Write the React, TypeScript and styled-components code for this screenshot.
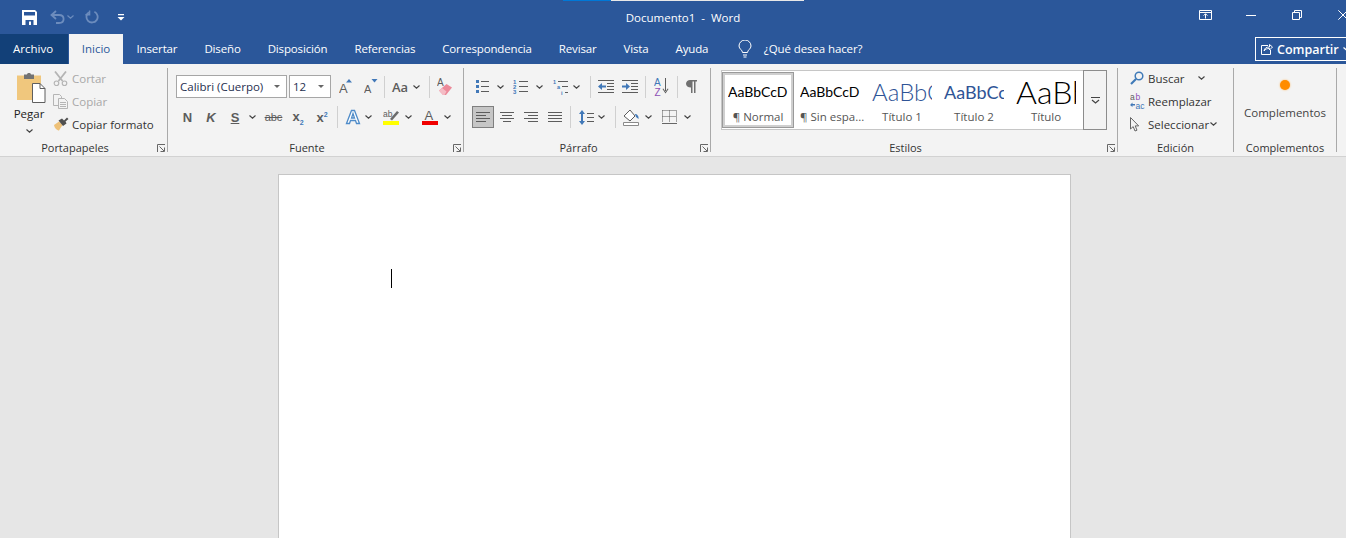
import React from 'react';
import styled, { createGlobalStyle } from 'styled-components';

const blue = '#2b579a';
const gray = '#5c5c5c';
const iconBlue = '#4178b8';
const uiFont = '"Open Sans", "Noto Sans", "Liberation Sans", sans-serif';

const GlobalStyle = createGlobalStyle`
  html, body {
    margin: 0;
    height: 100%;
    overflow: hidden;
    background: #e6e6e6;
  }
  body {
    font-family: ${uiFont};
    font-size: 11.5px;
    color: #444;
  }
`;

// ── small drawings ──

const Chev = ({ color = '#444' }: { color?: string }) => (
  <svg width="7" height="4" viewBox="0 0 7 4" fill="none">
    <path d="M.5.5l3 2.6 3-2.6" stroke={color} strokeWidth="1.2" />
  </svg>
);

const SaveIcon = () => (
  <svg width="15" height="15" viewBox="0 0 15 15">
    <path d="M0 0h13l2 2v13H0z" fill="#fff" />
    <path d="M2 2h11v3.500H2z" fill={blue} />
    <path d="M3.500 10h8v5h-8z" fill={blue} />
    <path d="M7 11.500h2V15H7z" fill="#fff" />
  </svg>
);

const UndoIcon = () => (
  <svg width="15" height="14" viewBox="0 0 15 14" fill="none" stroke="#6c8cbd" strokeWidth="1.8">
    <path d="M6 1L1.5 5 6 9" />
    <path d="M1.5 5H9c3 0 4.6 1.9 4.6 4s-1.6 4-4.6 4H6" />
  </svg>
);

const RedoIcon = () => (
  <svg width="14" height="14" viewBox="0 0 14 14" fill="none" stroke="#6c8cbd" strokeWidth="1.8">
    <path d="M4 2.200A5.600 5.600 0 1 0 9.400 1.800" />
    <path d="M4.600.4v4.400H.4" strokeWidth="1.4" />
  </svg>
);

const CustomizeIcon = () => (
  <svg width="8" height="7" viewBox="0 0 8 7" fill="#fff">
    <path d="M1 0h6v1.200H1zM.5 3h7L4 6.600z" />
  </svg>
);

const RibbonDisplayIcon = () => (
  <svg width="13" height="10" viewBox="0 0 13 10" fill="none" stroke="#fff">
    <path d="M.5.5h12v9H.5zM.5 2.500h12" />
    <path d="M6.500 8.500V4M4.600 5.600l1.900-1.900 1.900 1.900" />
  </svg>
);

const MinIcon = () => (
  <svg width="10" height="1" viewBox="0 0 10 1"><path d="M0 0h10v1H0z" fill="#fff" /></svg>
);

const RestoreIcon = () => (
  <svg width="10" height="10" viewBox="0 0 10 10" fill="none" stroke="#fff">
    <path d="M.5 2.500h7v7h-7zM2.500 2.500v-2h7v7h-2" />
  </svg>
);

const CloseIcon = () => (
  <svg width="10" height="10" viewBox="0 0 10 10" fill="none" stroke="#fff">
    <path d="M.3.3l9.400 9.400M9.700.3L.3 9.700" />
  </svg>
);

const BulbIcon = () => (
  <svg width="14" height="18" viewBox="0 0 14 18" fill="none" stroke="#fff">
    <path d="M4.500 12.500C4.500 10 1 9 1 6a6 6 0 0 1 12 0c0 3-3.500 4-3.500 6.500z" />
    <path d="M5 15h4M5.500 17h3" />
  </svg>
);

const ShareIcon = () => (
  <svg width="12" height="12" viewBox="0 0 12 12" fill="none" stroke="#fff">
    <path d="M7 2.500H.5v9h9V7" />
    <path d="M3 8c.4-3 2.500-4 5.500-4V1.500L11.500 4 8.500 7V5.500C6 5.500 4.500 6 3 8z" />
  </svg>
);

const PasteIcon = () => (
  <svg width="29" height="31" viewBox="0 0 29 31">
    <path d="M0 3.500h24V28H0z" fill="#f0c77d" />
    <path d="M7 2.500h3C10.400.600 13.600.600 14 2.500h3v4.500H7z" fill="#737373" />
    <path d="M15.500 11.500h7.500l5 5v14H15.500z" fill="#fff" stroke="#5f5f5f" />
    <path d="M23 11.500v5h5" fill="none" stroke="#5f5f5f" />
  </svg>
);

const CutIcon = () => (
  <svg width="15" height="15" viewBox="0 0 15 15" fill="none" stroke="#b5b5b5" strokeWidth="1.2">
    <path d="M2 .5l7.500 9.500M13 .5L5.500 10" strokeWidth="1.800" />
    <circle cx="3.500" cy="12.300" r="2.300" />
    <circle cx="11.500" cy="12.300" r="2.300" />
  </svg>
);

const CopyIcon = () => (
  <svg width="15" height="15" viewBox="0 0 15 15" fill="#f3f3f3" stroke="#b5b5b5">
    <path d="M.5.500h6l2 2v9h-8z" />
    <path d="M5.500 4.500h6l3 3v7h-9zM7 8.500h6M7 10.500h6M7 12.500h6" />
  </svg>
);

const BrushIcon = () => (
  <svg width="16" height="14" viewBox="0 0 16 14">
    <path d="M1 8l5-3.500L9.500 8 6 13.500C4 13.500 1.500 11 1 8z" fill="#eec178" />
    <path d="M5.500 3.500L9 1.500l2 2L14 .5l1.500 1.500-3 2.500 1 2-3.500 2.500z" fill="#505050" />
  </svg>
);

const GrowIcon = ({ up }: { up: boolean }) => (
  <svg width="14" height="15" viewBox="0 0 14 15">
    <text x="0" y="14" fontFamily='"Liberation Sans", sans-serif' fontSize={up ? 13 : 11} fill={gray}>A</text>
    <path d={up ? 'M7 3.500L10 0l3 3.500z' : 'M7.500 0h6l-3 3.500z'} fill={iconBlue} />
  </svg>
);

const EraserIcon = () => (
  <svg width="16" height="18" viewBox="0 0 16 18">
    <text x="0" y="8" fontFamily='"Liberation Sans", sans-serif' fontSize="10" fill={gray}>A</text>
    <path d="M2 12.500L9.500 6 15 9.500 9 17H6z" fill="#ec8a9a" />
    <path d="M2 12.500l3-2.500 4.500 3.500L7.500 17H6z" fill="#f4bcc5" />
  </svg>
);

const TextEffectIcon = () => (
  <svg width="16" height="16" viewBox="0 0 16 16" fill="#fff" stroke="#4f8cc9" strokeWidth="1.300">
    <path d="M1.500 14.500L6.500 1.500h3l5 13h-3l-1-3h-5l-1 3zM6.500 9h3L8 4.500z" />
  </svg>
);

const HighlightIcon = () => (
  <svg width="16" height="16" viewBox="0 0 16 16">
    <text x="0" y="8" fontFamily='"Liberation Sans", sans-serif' fontSize="8.500" fill={gray}>ab</text>
    <path d="M7 10l7-8 2 1.500-7 8z" fill="#6b6b6b" />
    <path d="M0 12h16v4H0z" fill="#ffff00" />
  </svg>
);

const FontColorIcon = () => (
  <svg width="16" height="16" viewBox="0 0 16 16">
    <text x="2.500" y="11" fontFamily='"Liberation Sans", sans-serif' fontSize="13" fill={gray}>A</text>
    <path d="M0 12h16v4H0z" fill="#f00000" />
  </svg>
);

const BulletsIcon = () => (
  <svg width="14" height="15" viewBox="0 0 14 15">
    <path d="M0 1h3v3H0zM0 6h3v3H0zM0 11h3v3H0z" fill={iconBlue} />
    <path d="M5 2h8v1H5zM5 7h8v1H5zM5 12h8v1H5z" fill={gray} />
  </svg>
);

const NumberingIcon = () => (
  <svg width="15" height="15" viewBox="0 0 15 15">
    <text y="5" fontFamily='"Liberation Sans", sans-serif' fontSize="6" fontWeight="700" fill={iconBlue}>1</text>
    <text y="10" fontFamily='"Liberation Sans", sans-serif' fontSize="6" fontWeight="700" fill={iconBlue}>2</text>
    <text y="15" fontFamily='"Liberation Sans", sans-serif' fontSize="6" fontWeight="700" fill={iconBlue}>3</text>
    <path d="M6 2h9v1H6zM6 7h9v1H6zM6 12h9v1H6z" fill={gray} />
  </svg>
);

const MultilevelIcon = () => (
  <svg width="15" height="16" viewBox="0 0 15 16">
    <text y="5" fontFamily='"Liberation Sans", sans-serif' fontSize="5.500" fontWeight="700" fill={iconBlue}>1</text>
    <text x="4" y="10" fontFamily='"Liberation Sans", sans-serif' fontSize="5.500" fontWeight="700" fill={iconBlue}>a</text>
    <text x="8" y="15.500" fontFamily='"Liberation Sans", sans-serif' fontSize="5.500" fontWeight="700" fill={iconBlue}>i</text>
    <path d="M5 2h10v1H5zM9 7h6v1H9zM12 13h3v1h-3z" fill={gray} />
  </svg>
);

const IndentIcon = ({ out }: { out: boolean }) => (
  <svg width="16" height="13" viewBox="0 0 16 13">
    <path d="M0 0h16v1H0zM9 3h7v1H9zM9 6h7v1H9zM9 9h7v1H9zM0 12h16v1H0z" fill={gray} />
    <path
      d={out ? 'M0 6.500L4 3v2.500h4v2H4V10z' : 'M8 6.500L4 3v2.500H0v2h4V10z'}
      fill={iconBlue}
    />
  </svg>
);

const SortIcon = () => (
  <svg width="15" height="19" viewBox="0 0 15 19">
    <text x="0" y="8.500" fontFamily='"Liberation Sans", sans-serif' fontSize="10" fill={iconBlue}>A</text>
    <text x="0.500" y="18.500" fontFamily='"Liberation Sans", sans-serif' fontSize="10" fill="#8d4fb5">Z</text>
    <path d="M11 1h1v14h-1zM8.500 12l3 4.500 3-4.500-.8-.4-2.200 3.200-2.200-3.200z" fill={gray} />
  </svg>
);

const PilcrowIcon = () => (
  <svg width="11" height="13" viewBox="0 0 11 13" fill="#707070">
    <path d="M4 0h7v1.500H9.500V13H8V1.500H6.500V13H5V7.500C2 7.500 0 6 0 3.800S2 0 4 0z" />
  </svg>
);

const AlignIcon = ({ d }: { d: string }) => (
  <svg width="14" height="10" viewBox="0 0 14 10">
    <path d={d} stroke={gray} fill="none" />
  </svg>
);

const LineSpacingIcon = () => (
  <svg width="15" height="15" viewBox="0 0 15 15">
    <path d="M3 0l3 4H4v7h2l-3 4-3-4h2V4H0z" fill={iconBlue} />
    <path d="M8 3h7v1H8zM8 7h7v1H8zM8 11h7v1H8z" fill={gray} />
  </svg>
);

const ShadingIcon = () => (
  <svg width="16" height="17" viewBox="0 0 16 17">
    <path d="M1 7l6-6 5 6-5 5z" fill="#fff" stroke={gray} />
    <path d="M12 5c2 0 4 2 3.500 5L13 8z" fill={iconBlue} />
    <path d="M.5 13.500h15v3H.5z" fill="#fff" stroke="#8a8a8a" />
  </svg>
);

const BordersIcon = () => (
  <svg width="15" height="14" viewBox="0 0 15 14" fill="none">
    <path d="M.5.500h14M.5.500v11M14.500.500v11M7.500.500v11M.5 6.500h14" stroke="#555" strokeDasharray="1 1" />
    <path d="M0 13h15v1H0z" fill="#666" />
  </svg>
);

const LauncherIcon = () => (
  <svg width="8" height="8" viewBox="0 0 8 8" fill="none" stroke="#666">
    <path d="M.5 8V.5H8" />
    <path d="M2.500 2.500L7 7M7.500 3.500v4h-4" />
  </svg>
);

const SearchIcon = () => (
  <svg width="14" height="14" viewBox="0 0 14 14" fill="none">
    <circle cx="9" cy="5" r="3.800" stroke="#3f7ab8" strokeWidth="1.500" />
    <path d="M6 8l-5 5" stroke="#3f7ab8" strokeWidth="2.200" />
  </svg>
);

const ReplaceIcon = () => (
  <svg width="16" height="16" viewBox="0 0 16 16">
    <text x="0" y="7" fontFamily='"Liberation Sans", sans-serif' fontSize="8.500" fill={gray}>a</text>
    <text x="5.500" y="7" fontFamily='"Liberation Sans", sans-serif' fontSize="8.500" fill="#8d4fb5">b</text>
    <text x="5.500" y="15.500" fontFamily='"Liberation Sans", sans-serif' fontSize="8.500" fill={iconBlue}>ac</text>
    <path d="M0 12l2.500-2.500v1.500H5v1.500H2.500V14z" fill={iconBlue} />
  </svg>
);

const CursorIcon = () => (
  <svg width="10" height="15" viewBox="0 0 10 15" fill="#f3f3f3" stroke="#666">
    <path d="M.5.500v11.500l2.700-2.400 1.800 4.400 2-.8-1.800-4.300h3.500z" />
  </svg>
);

const ScrollIcon = () => (
  <svg width="9" height="7" viewBox="0 0 9 7" fill="none" stroke="#444">
    <path d="M0 .5h9" />
    <path d="M1 3l3.500 3L8 3" strokeWidth="1.200" />
  </svg>
);

// ── page ──

const tabs = ['Insertar', 'Diseño', 'Disposición', 'Referencias', 'Correspondencia', 'Revisar', 'Vista', 'Ayuda'];

const styles = [
  { label: '¶ Normal', sample: 'AaBbCcD', kind: 'normal', selected: true },
  { label: '¶ Sin espa...', sample: 'AaBbCcD', kind: 'normal', selected: false },
  { label: 'Título 1', sample: 'AaBbCc', kind: 'h1', selected: false },
  { label: 'Título 2', sample: 'AaBbCcD', kind: 'h2', selected: false },
  { label: 'Título', sample: 'AaBbC', kind: 'title', selected: false },
];

const App = () => (
  <Window>
    <GlobalStyle />
    <TitleBar>
      <LoadingStrip>
        <LoadingPart $w={48} $color="#0078d7" />
        <LoadingPart $w={193} $color="#e8e8e8" />
      </LoadingStrip>
      <QuickAccess>
        <QuickSlot $w={15}><SaveIcon /></QuickSlot>
        <QuickSlot $w={15} $ml={13}><UndoIcon /></QuickSlot>
        <QuickSlot $w={7} $ml={2}><Chev color="#6c8cbd" /></QuickSlot>
        <QuickSlot $w={14} $ml={11}><RedoIcon /></QuickSlot>
        <QuickSlot $w={8} $ml={18}><CustomizeIcon /></QuickSlot>
      </QuickAccess>
      <DocTitle>Documento1&nbsp; - &nbsp;Word</DocTitle>
      <WindowButtons>
        <WindowButton><RibbonDisplayIcon /></WindowButton>
        <WindowButton><MinIcon /></WindowButton>
        <WindowButton><RestoreIcon /></WindowButton>
        <WindowButton><CloseIcon /></WindowButton>
      </WindowButtons>
    </TitleBar>

    <TabBar>
      <FileTab>Archivo</FileTab>
      <ActiveTab>Inicio</ActiveTab>
      {tabs.map((t) => (
        <Tab key={t}>{t}</Tab>
      ))}
      <TellMe>
        <BulbIcon />
        <span>¿Qué desea hacer?</span>
      </TellMe>
      <ShareButton>
        <ShareIcon />
        <span>Compartir</span>
        <Chev color="#fff" />
      </ShareButton>
    </TabBar>

    <Ribbon>
      <Group $w={168}>
        <ClipboardBody>
          <PasteButton>
            <PasteArt><PasteIcon /></PasteArt>
            <PasteLabel>Pegar</PasteLabel>
            <Chev />
          </PasteButton>
          <SmallColumn>
            <SmallRow $disabled><SmallIcon><CutIcon /></SmallIcon>Cortar</SmallRow>
            <SmallRow $disabled><SmallIcon><CopyIcon /></SmallIcon>Copiar</SmallRow>
            <SmallRow><SmallIcon><BrushIcon /></SmallIcon>Copiar formato</SmallRow>
          </SmallColumn>
        </ClipboardBody>
        <GroupLabel $launcher>Portapapeles</GroupLabel>
        <Launcher><LauncherIcon /></Launcher>
      </Group>

      <Group $w={296}>
        <ToolRows>
          <ToolRow $h={23}>
            <ComboBox $w={111}>
              <span>Calibri (Cuerpo)</span>
              <ComboArrow />
            </ComboBox>
            <ComboBox $w={42} $ml={2}>
              <span>12</span>
              <ComboArrow />
            </ComboBox>
            <Slot $w={24} $ml={3}><GrowIcon up /></Slot>
            <Slot $w={26}><GrowIcon up={false} /></Slot>
            <ToolSep />
            <Slot $w={22} $ml={4}><CaseText>Aa</CaseText></Slot>
            <Slot $w={10}><Chev /></Slot>
            <ToolSep $ml={8} />
            <Slot $w={30}><EraserIcon /></Slot>
          </ToolRow>
          <ToolRow>
            <Slot $w={23}><BoldGlyph>N</BoldGlyph></Slot>
            <Slot $w={24}><ItalicGlyph>K</ItalicGlyph></Slot>
            <Slot $w={24}><UnderGlyph>S</UnderGlyph></Slot>
            <Slot $w={11}><Chev /></Slot>
            <Slot $w={31}><StrikeGlyph>abc</StrikeGlyph></Slot>
            <Slot $w={18}><BoldGlyph>x<Sub>2</Sub></BoldGlyph></Slot>
            <Slot $w={30}><BoldGlyph>x<Sup>2</Sup></BoldGlyph></Slot>
            <ToolSep />
            <Slot $w={22} $ml={4}><TextEffectIcon /></Slot>
            <Slot $w={8}><Chev /></Slot>
            <Slot $w={18} $ml={10}><HighlightIcon /></Slot>
            <Slot $w={8} $ml={4}><Chev /></Slot>
            <Slot $w={18} $ml={9}><FontColorIcon /></Slot>
            <Slot $w={8} $ml={4}><Chev /></Slot>
          </ToolRow>
        </ToolRows>
        <GroupLabel $launcher>Fuente</GroupLabel>
        <Launcher><LauncherIcon /></Launcher>
      </Group>

      <Group $w={247}>
        <ToolRows>
          <ToolRow $h={23}>
            <Slot $w={21}><BulletsIcon /></Slot>
            <Slot $w={8} $ml={3}><Chev /></Slot>
            <Slot $w={21} $ml={6}><NumberingIcon /></Slot>
            <Slot $w={8} $ml={4}><Chev /></Slot>
            <Slot $w={22} $ml={6}><MultilevelIcon /></Slot>
            <Slot $w={8} $ml={1}><Chev /></Slot>
            <ToolSep $ml={10} />
            <Slot $w={30}><IndentIcon out /></Slot>
            <Slot $w={18}><IndentIcon out={false} /></Slot>
            <ToolSep $ml={6} />
            <Slot $w={31}><SortIcon /></Slot>
            <ToolSep />
            <Slot $w={27}><PilcrowIcon /></Slot>
          </ToolRow>
          <ToolRow>
            <AlignButton $active><AlignIcon d="M0 .5h14M0 3.500h10M0 6.500h14M0 9.500h10" /></AlignButton>
            <AlignButton $ml={2}><AlignIcon d="M0 .5h14M2 3.500h10M0 6.500h14M3 9.500h8" /></AlignButton>
            <AlignButton $ml={2}><AlignIcon d="M0 .5h14M4 3.500h10M0 6.500h14M4 9.500h10" /></AlignButton>
            <AlignButton $ml={2}><AlignIcon d="M0 .5h14M0 3.500h14M0 6.500h14M0 9.500h14" /></AlignButton>
            <ToolSep $ml={4} />
            <Slot $w={22} $ml={4}><LineSpacingIcon /></Slot>
            <Slot $w={8}><Chev /></Slot>
            <ToolSep $ml={10} />
            <Slot $w={22} $ml={4}><ShadingIcon /></Slot>
            <Slot $w={8} $ml={2}><Chev /></Slot>
            <Slot $w={21} $ml={7}><BordersIcon /></Slot>
            <Slot $w={8} $ml={3}><Chev /></Slot>
          </ToolRow>
        </ToolRows>
        <GroupLabel $launcher>Párrafo</GroupLabel>
        <Launcher><LauncherIcon /></Launcher>
      </Group>

      <Group $w={407}>
        <StylesBody>
          <Gallery>
            {styles.map((s) => (
              <StyleItem key={s.label} $selected={s.selected}>
                <StyleSample $kind={s.kind}>{s.sample}</StyleSample>
                <StyleName>{s.label}</StyleName>
              </StyleItem>
            ))}
          </Gallery>
          <GalleryScroll><ScrollIcon /></GalleryScroll>
        </StylesBody>
        <GroupLabel $launcher>Estilos</GroupLabel>
        <Launcher><LauncherIcon /></Launcher>
      </Group>

      <Group $w={116}>
        <EditColumn>
          <SmallRow>
            <EditIcon><SearchIcon /></EditIcon>Buscar
            <RowChev $ml={13}><Chev /></RowChev>
          </SmallRow>
          <SmallRow><EditIcon><ReplaceIcon /></EditIcon>Reemplazar</SmallRow>
          <SmallRow>
            <EditIcon><CursorIcon /></EditIcon>Seleccionar
            <RowChev $ml={1}><Chev /></RowChev>
          </SmallRow>
        </EditColumn>
        <GroupLabel>Edición</GroupLabel>
      </Group>

      <Group $w={103}>
        <AddinBody>
          <AddinDot />
          <AddinLabel>Complementos</AddinLabel>
        </AddinBody>
        <GroupLabel>Complementos</GroupLabel>
      </Group>
    </Ribbon>

    <DocArea>
      <Sheet>
        <Caret />
      </Sheet>
    </DocArea>
  </Window>
);

export default App;

// ── Styled Components ──

const Window = styled.div`
  width: 1366px;
  height: 538px;
  overflow: hidden;
  display: flex;
  flex-direction: column;
`;

const TitleBar = styled.div`
  position: relative;
  height: 34px;
  flex-shrink: 0;
  background: ${blue};
  display: grid;
  grid-template-columns: 1fr auto 1fr;
  align-items: center;
`;

const LoadingStrip = styled.div`
  position: absolute;
  top: 0;
  left: 563px;
  display: flex;
  height: 1px;
`;

const LoadingPart = styled.div<{ $w: number; $color: string }>`
  width: ${({ $w }) => $w}px;
  background: ${({ $color }) => $color};
`;

const QuickAccess = styled.div`
  display: flex;
  align-items: center;
  padding-left: 22px;
`;

const QuickSlot = styled.div<{ $w: number; $ml?: number }>`
  width: ${({ $w }) => $w}px;
  margin-left: ${({ $ml }) => $ml ?? 0}px;
  display: flex;
  justify-content: center;
`;

const DocTitle = styled.div`
  color: #fff;
  font-size: 11.5px;
  white-space: nowrap;
`;

const WindowButtons = styled.div`
  display: flex;
  justify-content: flex-end;
  align-self: start;
`;

const WindowButton = styled.div`
  width: 46px;
  height: 30px;
  display: flex;
  align-items: center;
  justify-content: center;
`;

const TabBar = styled.div`
  height: 30px;
  flex-shrink: 0;
  background: ${blue};
  display: flex;
  color: #fff;
`;

const Tab = styled.div`
  padding: 0 13.5px;
  line-height: 29px;
  letter-spacing: -0.15px;
  white-space: nowrap;
`;

const FileTab = styled(Tab)`
  width: 68px;
  box-sizing: border-box;
  padding: 0 13px;
  letter-spacing: 0;
  background: #124078;
  margin-right: 1px;
`;

const ActiveTab = styled(Tab)`
  width: 54px;
  box-sizing: border-box;
  padding: 0;
  text-align: center;
  letter-spacing: 0;
  background: #f3f3f3;
  color: #2b579a;
`;

const TellMe = styled.div`
  display: flex;
  align-items: center;
  gap: 12px;
  margin-left: 16px;
  height: 29px;
  letter-spacing: -0.1px;
  white-space: nowrap;
`;

const ShareButton = styled.div`
  margin-left: auto;
  margin-top: 3px;
  margin-right: 2px;
  width: 109px;
  height: 24px;
  box-sizing: border-box;
  border: 1px solid #fff;
  display: flex;
  align-items: center;
  gap: 4px;
  padding-left: 5px;
  font-size: 12.5px;
  font-weight: 600;
`;

const Ribbon = styled.div`
  height: 93px;
  flex-shrink: 0;
  box-sizing: border-box;
  background: #f3f3f3;
  border-bottom: 1px solid #d2d2d2;
  padding-top: 4px;
  display: flex;
  align-items: flex-start;
`;

const Group = styled.div<{ $w: number }>`
  position: relative;
  width: ${({ $w }) => $w}px;
  height: 84px;
  box-sizing: border-box;
  flex-shrink: 0;
  border-right: 1px solid #a9a9a9;
  display: flex;
  flex-direction: column;
`;

const GroupLabel = styled.div<{ $launcher?: boolean }>`
  height: 12px;
  line-height: 16px;
  font-size: 11px;
  text-align: center;
  white-space: nowrap;
  padding-right: ${({ $launcher }) => ($launcher ? 17 : 0)}px;
  color: #333;
`;

const Launcher = styled.div`
  position: absolute;
  right: 2px;
  bottom: 0;
  height: 8px;
  line-height: 0;
`;

const ClipboardBody = styled.div`
  flex: 1;
  display: flex;
`;

const PasteButton = styled.div`
  width: 53px;
  padding: 4px 0 0 5px;
  box-sizing: border-box;
  display: flex;
  flex-direction: column;
  align-items: center;
  color: #222;
`;

const PasteArt = styled.div`
  margin-left: 4px;
  line-height: 0;
`;

const PasteLabel = styled.div`
  margin: 3px 0 7px;
  line-height: 16px;
`;

const SmallColumn = styled.div`
  display: flex;
  flex-direction: column;
  gap: 3px;
`;

const EditColumn = styled(SmallColumn)`
  flex: 1;
  padding-left: 12px;
`;

const SmallRow = styled.div<{ $disabled?: boolean }>`
  height: 20px;
  display: flex;
  align-items: center;
  white-space: nowrap;
  color: ${({ $disabled }) => ($disabled ? '#a8a8a8' : '#333')};
`;

const SmallIcon = styled.span`
  width: 18px;
  margin-right: 1px;
  flex-shrink: 0;
  display: flex;
  align-items: center;
`;

const EditIcon = styled(SmallIcon)`
  margin-right: 0;
`;

const RowChev = styled.span<{ $ml: number }>`
  display: flex;
  margin-left: ${({ $ml }) => $ml}px;
`;

const ToolRows = styled.div`
  flex: 1;
  padding: 7px 0 0 8px;
  display: flex;
  flex-direction: column;
  gap: 8px;
`;

const ToolRow = styled.div<{ $h?: number }>`
  height: ${({ $h }) => $h ?? 22}px;
  display: flex;
  align-items: center;
`;

const ComboBox = styled.div<{ $w: number; $ml?: number }>`
  width: ${({ $w }) => $w}px;
  height: 23px;
  margin-left: ${({ $ml }) => $ml ?? 0}px;
  box-sizing: border-box;
  flex-shrink: 0;
  border: 1px solid #a6a6a6;
  background: #fff;
  padding: 0 6px 0 3px;
  display: flex;
  align-items: center;
  justify-content: space-between;
  font-size: 11.5px;
  color: #1f2f4f;
  white-space: nowrap;
`;

const ComboArrow = styled.span`
  width: 0;
  height: 0;
  border-left: 3px solid transparent;
  border-right: 3px solid transparent;
  border-top: 3px solid #666;
`;

const Slot = styled.div<{ $w: number; $ml?: number }>`
  width: ${({ $w }) => $w}px;
  margin-left: ${({ $ml }) => $ml ?? 0}px;
  flex-shrink: 0;
  display: flex;
  align-items: center;
  justify-content: center;
`;

const ToolSep = styled.div<{ $ml?: number }>`
  width: 1px;
  height: 22px;
  flex-shrink: 0;
  margin-left: ${({ $ml }) => $ml ?? 0}px;
  background: #d0d0d0;
`;

const CaseText = styled.span`
  font-size: 13px;
  font-weight: 600;
  color: ${gray};
`;

const BoldGlyph = styled.span`
  font-family: "Liberation Sans", sans-serif;
  font-size: 13px;
  font-weight: 700;
  color: ${gray};
`;

const ItalicGlyph = styled(BoldGlyph)`
  font-style: italic;
`;

const UnderGlyph = styled(BoldGlyph)`
  text-decoration: underline;
`;

const StrikeGlyph = styled.span`
  font-family: "Liberation Sans", sans-serif;
  font-size: 11px;
  color: ${gray};
  text-decoration: line-through;
`;

const Sub = styled.sub`
  font-size: 7px;
  color: ${iconBlue};
`;

const Sup = styled.sup`
  font-size: 7px;
  line-height: 0;
  color: ${iconBlue};
`;

const AlignButton = styled.div<{ $active?: boolean; $ml?: number }>`
  width: 22px;
  height: 22px;
  box-sizing: border-box;
  flex-shrink: 0;
  margin-left: ${({ $ml }) => $ml ?? 0}px;
  display: flex;
  align-items: center;
  justify-content: center;
  background: ${({ $active }) => ($active ? '#c6c6c6' : 'transparent')};
  border: 1px solid ${({ $active }) => ($active ? '#7f7f7f' : 'transparent')};
`;

const StylesBody = styled.div`
  flex: 1;
  display: flex;
  align-items: flex-start;
  padding: 2px 0 0 10px;
`;

const Gallery = styled.div`
  width: 362px;
  height: 60px;
  box-sizing: border-box;
  background: #fff;
  border: 1px solid #c6c6c6;
  border-right: none;
  padding-top: 1px;
  display: flex;
`;

const StyleItem = styled.div<{ $selected: boolean }>`
  width: 72px;
  height: 56px;
  box-sizing: border-box;
  flex-shrink: 0;
  border: 1px solid ${({ $selected }) => ($selected ? '#9a9a9a' : 'transparent')};
  box-shadow: ${({ $selected }) => ($selected ? 'inset 0 0 0 2px #cfcfcf' : 'none')};
  padding: 2px 5px;
  display: flex;
  flex-direction: column;
`;

const sampleStyle: Record<string, string> = {
  normal: 'font-size: 14px; color: #000; font-weight: 400;',
  h1: 'font-size: 24px; color: #2f5496; font-weight: 300;',
  h2: 'font-size: 18px; color: #2f5496; font-weight: 400;',
  title: 'font-size: 32px; color: #000; font-weight: 300;',
};

const StyleSample = styled.div<{ $kind: string }>`
  height: 34px;
  line-height: 34px;
  overflow: hidden;
  white-space: nowrap;
  font-family: Lato, "Liberation Sans", sans-serif;
  ${({ $kind }) => sampleStyle[$kind]}
`;

const StyleName = styled.div`
  height: 16px;
  line-height: 16px;
  text-align: center;
  white-space: nowrap;
  color: #555;
`;

const GalleryScroll = styled.div`
  width: 24px;
  height: 60px;
  box-sizing: border-box;
  border: 1px solid #8c8c8c;
  display: flex;
  align-items: center;
  justify-content: center;
`;

const AddinBody = styled.div`
  flex: 1;
  display: flex;
  flex-direction: column;
  align-items: center;
  padding-top: 12px;
`;

const AddinDot = styled.div`
  width: 10px;
  height: 10px;
  border-radius: 50%;
  background: #ff8c00;
  box-shadow: 0 0 2px #ffb45a;
`;

const AddinLabel = styled.div`
  margin-top: 15px;
  line-height: 16px;
  white-space: nowrap;
`;

const DocArea = styled.div`
  flex: 1;
  width: 1349px;
  padding-top: 17px;
  display: flex;
  justify-content: center;
  background: #e6e6e6;
`;

const Sheet = styled.div`
  width: 793px;
  height: 600px;
  box-sizing: border-box;
  flex-shrink: 0;
  background: #fff;
  border: 1px solid #c6c6c6;
  padding: 94px 0 0 112px;
`;

const Caret = styled.div`
  width: 1px;
  height: 19px;
  background: #000;
`;
